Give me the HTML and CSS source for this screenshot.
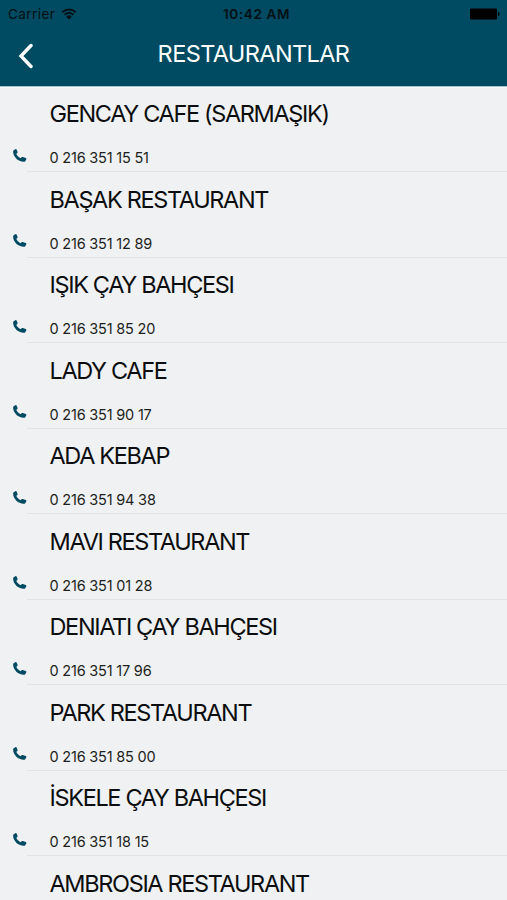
FILE: index.html
```html
<!DOCTYPE html>
<html lang="tr">
  <head>
    <meta charset="UTF-8" />
    <meta name="viewport" content="width=device-width, initial-scale=1">
    <title>Restaurantlar</title>
    <link rel="stylesheet" href="styles.css">
  </head>
  <body>
    <svg width="0" height="0" class="symbols">
      <symbol id="phone" viewBox="0 0 14 14">
        <path d="M.8 1.200 2.300.2c.6-.3 1.200-.1 1.400.5l.8 2.100c.2.600.1 1.100-.4 1.400l-.8.600c.8 2.100 2.200 3.400 4.200 4.400l.9-.8c.5-.4.9-.5 1.400-.3l2.900 1c.6.200.8.800.5 1.300l-.8 1.500c-.3.600-.9.900-1.600.9C5.300 12.900.2 8.100.1 2.600c0-.6.2-1.100.7-1.400Z" />
      </symbol>
    </svg>

    <header class="header">
      <div class="status-bar">
        <div class="status-left">
          <span class="carrier">Carrier</span>
          <svg class="wifi" viewBox="0 0 16 12">
            <path d="M1.300 4.200a9.700 9.700 0 0 1 13.400 0M3.600 6.700a6.300 6.300 0 0 1 8.800 0" fill="none" stroke="currentColor" stroke-width="1.900" />
            <path d="M5.200 8.700a4 4 0 0 1 5.600 0L8 11.500Z" fill="currentColor" />
          </svg>
        </div>
        <div class="clock">10:42 AM</div>
        <svg class="battery" viewBox="0 0 30 12">
          <rect x="0" y="0.500" width="27" height="11" rx="1" />
          <path d="M28 4c1 .2 1.600 1 1.600 2s-.6 1.800-1.600 2Z" />
        </svg>
      </div>
      <nav class="nav-bar">
        <a class="back" href="#" aria-label="Geri">
          <svg viewBox="0 0 16 26"><path d="M14 2.500 4 13l10 10.500" /></svg>
        </a>
        <h1 class="title">RESTAURANTLAR</h1>
      </nav>
    </header>

    <ul class="list">
      <li class="item">
        <h2 class="name">GENCAY CAFE (SARMAŞIK)</h2>
        <svg class="phone-icon"><use href="#phone" /></svg>
        <p class="phone">0 216 351 15 51</p>
      </li>
      <li class="item">
        <h2 class="name">BAŞAK RESTAURANT</h2>
        <svg class="phone-icon"><use href="#phone" /></svg>
        <p class="phone">0 216 351 12 89</p>
      </li>
      <li class="item">
        <h2 class="name">IŞIK ÇAY BAHÇESI</h2>
        <svg class="phone-icon"><use href="#phone" /></svg>
        <p class="phone">0 216 351 85 20</p>
      </li>
      <li class="item">
        <h2 class="name">LADY CAFE</h2>
        <svg class="phone-icon"><use href="#phone" /></svg>
        <p class="phone">0 216 351 90 17</p>
      </li>
      <li class="item">
        <h2 class="name">ADA KEBAP</h2>
        <svg class="phone-icon"><use href="#phone" /></svg>
        <p class="phone">0 216 351 94 38</p>
      </li>
      <li class="item">
        <h2 class="name">MAVI RESTAURANT</h2>
        <svg class="phone-icon"><use href="#phone" /></svg>
        <p class="phone">0 216 351 01 28</p>
      </li>
      <li class="item">
        <h2 class="name">DENIATI ÇAY BAHÇESI</h2>
        <svg class="phone-icon"><use href="#phone" /></svg>
        <p class="phone">0 216 351 17 96</p>
      </li>
      <li class="item">
        <h2 class="name">PARK RESTAURANT</h2>
        <svg class="phone-icon"><use href="#phone" /></svg>
        <p class="phone">0 216 351 85 00</p>
      </li>
      <li class="item">
        <h2 class="name">İSKELE ÇAY BAHÇESI</h2>
        <svg class="phone-icon"><use href="#phone" /></svg>
        <p class="phone">0 216 351 18 15</p>
      </li>
      <li class="item">
        <h2 class="name">AMBROSIA RESTAURANT</h2>
      </li>
    </ul>
  </body>
</html>
```

FILE: styles.css
```css
:root {
  --header-blue: #004a62;
  --page-gray: #eff1f3;
  --line-gray: #e1e4e6;
}

* {
  margin: 0;
  padding: 0;
  box-sizing: border-box;
}

body {
  height: 100vh;
  overflow: hidden;
  display: flex;
  flex-direction: column;
  background: var(--page-gray);
  color: #0c0d0e;
  font-family: Inter, "Liberation Sans", sans-serif;
}

.symbols {
  display: none;
}

.header {
  flex: none;
  height: 86.6px;
  background: var(--header-blue);
  border-bottom: 1px solid #a9bfc8;
  box-shadow: 0 1px 0 #fafbfc;
}

.status-bar {
  display: grid;
  grid-template-columns: 1fr auto 1fr;
  align-items: center;
  height: 27px;
  padding: 0 7px 0 8px;
  color: #031014;
}

.status-left {
  display: flex;
  align-items: center;
  gap: 6px;
}

.carrier {
  font-size: 13.5px;
  letter-spacing: 0.45px;
}

.wifi {
  width: 16px;
  height: 12px;
}

.clock {
  padding-left: 5px;
  font-size: 13.5px;
  font-weight: 600;
  letter-spacing: 0.65px;
}

.battery {
  justify-self: end;
  width: 30px;
  height: 12px;
  fill: #000;
}

.nav-bar {
  display: grid;
  grid-template-columns: 52px 1fr 52px;
  align-items: center;
  height: 54px;
}

.back {
  display: flex;
  padding: 3px 0 0 17px;
}

.back svg {
  width: 16px;
  height: 26px;
  fill: none;
  stroke: #fff;
  stroke-linecap: round;
  stroke-width: 3.4;
}

.title {
  color: #fff;
  font-size: 23.5px;
  font-weight: 400;
  letter-spacing: -0.6px;
  line-height: 30px;
  text-align: center;
}

.list {
  list-style: none;
}

.item {
  display: grid;
  grid-template-columns: 49.5px 1fr;
  grid-template-rows: 54px 31.5px;
  height: 85.5px;
  background: linear-gradient(var(--line-gray), var(--line-gray)) 27px 100% / 100% 1px no-repeat;
}

.name {
  grid-column: 2;
  padding-top: 12.5px;
  font-size: 23.5px;
  font-weight: 400;
  letter-spacing: -1.35px;
  line-height: 30px;
  white-space: nowrap;
}

.phone-icon {
  width: 14px;
  height: 14px;
  margin: 8px 0 0 13px;
  fill: var(--header-blue);
}

.phone {
  padding-top: 8.5px;
  color: #1d1f20;
  font-size: 14.5px;
  letter-spacing: -0.2px;
  line-height: 18px;
}
```
